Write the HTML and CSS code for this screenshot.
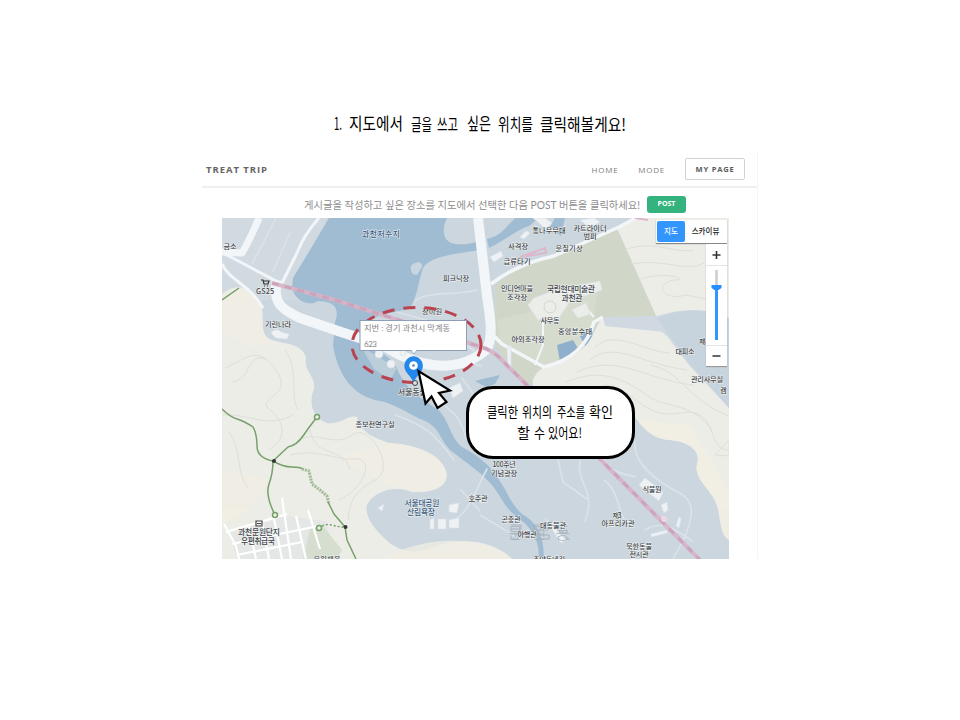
FILE: index.html
```html
<!DOCTYPE html>
<html lang="ko">
<head>
<meta charset="utf-8">
<title>Treat Trip</title>
<link rel="stylesheet" href="styles.css">
</head>
<body>
<main class="slide">
  <h1 class="caption"><svg class="hand" width="300" height="34" viewBox="330 107 300 34" font-size="17"><text x="334" y="130" textLength="8" lengthAdjust="spacingAndGlyphs">1.</text><text x="349" y="130" textLength="54" lengthAdjust="spacingAndGlyphs">지도에서</text><text x="411" y="131" textLength="21" lengthAdjust="spacingAndGlyphs">글을</text><text x="437" y="131" textLength="21" lengthAdjust="spacingAndGlyphs">쓰고</text><text x="467" y="130" textLength="24" lengthAdjust="spacingAndGlyphs">싶은</text><text x="498" y="131" textLength="35" lengthAdjust="spacingAndGlyphs">위치를</text><text x="540" y="131" textLength="86" lengthAdjust="spacingAndGlyphs">클릭해볼게요!</text></svg></h1>
  <section class="app">
    <header class="nav">
      <span class="brand">TREAT TRIP</span>
      <nav class="links"><span>HOME</span><span>MODE</span><span class="mypage">MY PAGE</span></nav>
    </header>
    <div class="prompt">
      <svg width="340" height="22" viewBox="302 195 340 22"><text class="prompt-text" x="304" y="209" font-size="10.5" textLength="336" lengthAdjust="spacingAndGlyphs">게시글을 작성하고 싶은 장소를 지도에서 선택한 다음 POST 버튼을 클릭하세요!</text></svg>
      <span class="post">POST</span>
    </div>
    <div class="map">
      <svg class="canvas" width="507" height="341" viewBox="222 218 507 341">
        <rect x="222" y="218" width="507" height="341" fill="#cbd6de"/>
        <path fill="#d2dae1" d="M222 218H328L310 250 293 278 300 300 222 300Z"/>
        <!-- water -->
        <g fill="#a0bcd3">
          <path d="M329 218H447C441 230 443 243 456 244C466 245 474 243 478 241L479 250C456 254 430 256 423 268C418 282 418 295 410 308C400 312 385 312 372 319L370 345C380 352 390 356 397 368C404 388 421 398 437 409C450 420 449 436 462 447C482 458 490 466 499 480C507 490 509 502 522 514C535 522 544 532 544 559H539C539 540 533 530 521 520C506 510 503 500 495 489C484 474 468 464 450 450C439 438 440 428 425 421C406 413 393 402 375 400C350 393 338 373 333 346L335 322C341 306 331 301 318 301C310 307 294 301 292 287L293 278 310 250Z"/>
          <path d="M487 239C503 236 507 224 516 218H539L529 226C516 230 506 240 489 248Z"/>
          <path d="M550 227 555 218H565L561 236Z"/>
          <path d="M475 381 487 378 500 375 495 384 486 387Z"/>
        </g>
        <path fill="#c8d6e0" d="M411 266C415 261 423 261 422 267L417 275C412 275 410 271 411 266Z"/>
        <path fill="#c9d5de" d="M356 338C361 340 366 346 370 352L397 368 390 380 374 369Z" opacity=".7"/>
        <!-- green park -->
        <path fill="#d0d7c8" d="M495 287C510 268 540 260 561 253L617 228 657 318 604 319C588 330 590 346 573 359L544 370C534 378 532 385 526 388L512 372 495 344Z"/>
        <path fill="#d6dccd" d="M497 320 530 312 555 286 597 282 598 290 590 338 574 354 545 365 500 340Z"/>
        <g fill="#8fb0cc"><path d="M557 345 573 340 579 350 567 362 560 362Z"/><path d="M580 336 592 328 593 340 585 346Z"/></g>
        <!-- hills -->
        <g fill="#ededE8">
          <path d="M617 228 635 218H729V318C715 311 690 307 657 318Z"/>
          <path d="M545 366C565 360 580 355 590 340L601 319 655 327 670 338 690 364 729 406V540C716 532 724 510 712 495C701 480 693 474 698 461C700 449 685 441 668 440C651 438 645 427 637 420L620 398 540 390C527 387 533 374 545 366Z"/>
          <path d="M222 294C240 280 253 290 260 302C266 317 259 330 268 338C280 345 302 341 306 358C303 371 316 376 314 389C308 403 313 418 327 423C341 425 348 414 357 417C361 432 371 437 390 443C414 444 445 455 447 475C446 490 428 493 412 492C395 485 374 491 367 505C364 518 378 533 391 544C410 556 421 551 440 545C465 537 496 542 512 559H222Z"/>
        </g>
        <g fill="#f1eee3" opacity=".75">
          <path d="M222 297C240 282 254 293 260 304 262 323 260 335 270 341L250 348 222 330Z"/>
          <path d="M390 444C420 444 445 457 446 474 445 489 427 492 415 491 390 488 361 475 340 455Z"/>
          <path d="M637 420C649 438 664 440 672 440 690 442 700 450 697 463 695 478 704 483 712 496 722 510 717 530 729 540V490L690 425Z"/>
          <path d="M401 550C442 535 485 538 512 559H385Z"/>
          <path d="M222 468 270 480 250 510 222 525Z"/>
        </g>
        <g fill="none" stroke="#dddfd8" stroke-width="1">
          <path d="M225 368C245 360 257 343 276 370S254 398 270 410 286 440 270 449M233 382C252 378 247 352 266 359M222 415C250 413 268 430 294 414M285 350C300 370 289 395 298 410M298 440C318 430 334 448 352 435S392 465 380 476 350 488 348 520M290 455C320 448 335 461 355 459S365 490 338 500M229 432C242 449 236 474 248 488M310 430C315 460 345 445 350 470"/>
          <path d="M627 249C654 240 675 254 693 250M631 264C664 258 686 273 704 263M641 279C668 270 690 281 674 280 654 283 662 302 686 295L706 299M665 232C680 240 690 230 729 241M595 347C615 329 640 350 669 353M590 360C614 340 641 364 687 370M577 372C618 353 642 379 693 385M566 382C595 370 618 374 645 394 665 410 690 400 712 430M603 385C635 386 640 420 680 413S705 450 729 450M650 365C680 370 690 402 729 416M715 455 729 440V456Z"/>
        </g>
        <!-- pale park paths -->
        <g fill="none" stroke="#dbe3e8" stroke-width="1.6" stroke-linecap="round">
          <path d="M415 301C428 290 457 296 477 290M397 312 440 324 474 351M405 352C425 390 456 353 481 366M430 386C443 414 457 404 466 438M452 521C470 513 477 487 487 469M480 515 520 539M580 460C576 485 597 490 585 521M558 459 563 482 587 499M635 441C632 466 662 484 681 494S690 530 673 559M604 459C612 475 626 473 635 477M604 480C618 490 618 510 625 521M645 530C661 520 674 528 692 541M395 415C425 425 436 435 454 460"/>
          <path d="M252 264 270 230 276 218M273 271 290 233M462 378 480 403M461 490 480 511"/>
        </g>
        <!-- roads -->
        <g fill="none" stroke="#f3f6f8" stroke-linejoin="round">
          <path stroke-width="7" d="M259 218C253 232 248 243 242 253L222 252"/>
          <path stroke-width="3" d="M223 253 278 282M319 218C302 237 300 247 295 257L280 287M222 264C230 281 249 284 263 308"/>
          <path stroke-width="10" d="M277 280C272 304 283 310 300 318L341 332 384 346C415 366 455 376 486 350C494 339 490 315 487 296L478 218"/>
          <path stroke-width="3.500" d="M491 284C512 268 535 260 554 256L619 227 636 218M489 331 502 344 544 367C569 361 587 348 594 322L603 317"/>
          <path stroke-width="2" d="M543 314V345L535 365M584 306 594 317"/>
        </g>
        <path fill="#d0d9e2" d="M603 317 657 316C685 307 710 308 729 319V408L688 364 664 332 605 326Z"/>
        <path fill="#c7d4de" d="M657 318C682 308 710 308 729 319V408L690 364 668 334Z"/>
        <!-- residential blocks -->
        <path fill="#e4e7e5" d="M229 533 286 516 326 521 333 559H237Z"/>
        <path fill="#d6decf" d="M310 529 323 526 342 550 337 559H303Z"/>
        <g fill="none" stroke="#fff" stroke-width="2.2">
          <path d="M226 532 287 514M232 544 318 526M237 555 302 542M224 524 236 546 239 559M282 498 291 559M296 516 306 559M308 510 320 549M249 527 256 559M262 523 269 559M274 519 282 559"/>
        </g>
        <!-- trails -->
        <g fill="none" stroke="#76a069" stroke-width="1.5" stroke-linejoin="round">
          <path d="M222 300 239 288M222 409Q230 417 237 419T253 427Q257 434 257 446T273 461Q273 473 269 484T275 515M317 417Q309 427 303 436T288 447L273 461Q283 467 292 467T302 469M328 502 334 514 345 527 347 540 356 559"/>
          <path stroke-dasharray="2 1" stroke-width="3" opacity=".65" d="M302 469 309 471 312 484 320 490 327 496 329 504"/>
          <path stroke-dasharray="2 2" d="M322 526C330 522 337 528 345 527"/>
          <g fill="#eef2e8"><circle cx="317" cy="417" r="2.5"/><circle cx="275" cy="515" r="2.5"/><circle cx="319" cy="528" r="2.5"/></g>
        </g>
        <g fill="#333"><circle cx="274" cy="461" r="2"/><circle cx="345.500" cy="527" r="2"/></g>
        <!-- buildings -->
        <g fill="#eef2f5" stroke="#dce3e9" stroke-width=".7">
          <path d="M490 257 501 251 503 256 494 262ZM520 237 526 231 530 233 524 239ZM533 218H545L552 223 546 229ZM580 220 594 218 600 222 590 228Z"/>
          <path fill="#ebede8" d="M528 305 534 298 550 292 600 281 602 290 570 301 557 321 545 317 538 320ZM572 310 586 303 590 314 578 318Z"/>
          <path d="M639 485 645 478 663 492 659 501ZM661 505 667 502 668 510 664 513ZM676 526 679 517 681 518 679 528ZM651 534 667 530 667 533 651 537Z"/>
          <path d="M430 520 434 518V529H430ZM438 519H446V529H438ZM449 520 459 518V528H449ZM449 505 459 503 457 513 449 512ZM545 518 566 540 561 543ZM473 499 481 497 482 503ZM378 508 384 504 382 511Z"/>
          <path d="M271 333C274 329 279 329 281 332L289 334 287 339 276 338Z"/><circle cx="379" cy="354" r="4"/><circle cx="391" cy="364" r="4"/><circle cx="403" cy="353" r="3"/><path d="M449 388 460 383 463 391 453 398ZM507 347 511 345 511 368 508 368Z"/>
        </g>
        <g fill="none" stroke="#d2d7d5"><circle cx="550" cy="307" r="6"/></g>
        <g fill="none" stroke="#a4b0ba" stroke-width=".9"><path d="M511 525H521V529H511M511 534H518V539H511M534 525H548V530H534ZM537 535H549V539H537M560 533H567V530H560ZM566 539H570"/></g>
        <!-- cable line -->
        <g fill="none">
          <path d="M272 283 335 300 411 324 478 346C498 351 503 363 516 374L598 457 702 562" stroke="#d8b3c6" stroke-width="4" opacity=".9"/>
          <path d="M272 283 335 300 411 324 478 346C498 351 503 363 516 374L598 457 702 562" stroke="#c8a0b8" stroke-width="3" stroke-dasharray="7 6" opacity=".8"/>
          <path d="M520 257 545 248 546 253 520 257M635 218 648 220" stroke="#deb6c9" stroke-width="2"/>
        </g>
        <circle cx="664" cy="519" r="3" fill="#f2d5e5"/>
        <text class="district" x="508" y="539" font-size="16" textLength="62">문 원 동</text>
        <!-- place names -->
        <g class="labels">
          <text class="water" x="381" y="236.500" textLength="38">과천저수지</text>
          <text x="230" y="249" textLength="13">금소</text>
          <text x="265" y="294" textLength="18" font-size="8">GS25</text>
          <text x="278" y="327" textLength="26">기린나라</text>
          <text x="456" y="281" textLength="26">피크닉장</text>
          <text x="432" y="314" textLength="20">장미원</text>
          <text x="518" y="249" textLength="20">사격장</text>
          <text x="517" y="264" textLength="27">급류타기</text>
          <text x="549" y="233" textLength="33">통나무무대</text>
          <text x="590" y="230.500" textLength="33">카트라이더</text><text x="590" y="239" textLength="13">범퍼</text>
          <text x="569" y="251" textLength="27">문칠기상</text>
          <text x="517" y="291" textLength="32">인디언마을</text><text x="517" y="300" textLength="20">조각장</text>
          <text class="big" x="571" y="292" textLength="48">국립현대미술관</text><text class="big" x="572" y="301" textLength="21">과천관</text>
          <text x="550" y="323" textLength="19">사무동</text>
          <text x="575" y="334" textLength="34">중앙분수대</text>
          <text x="528" y="342" textLength="33">야외조각장</text>
          <text x="685" y="354" textLength="19">대피소</text>
          <text x="711" y="344" textLength="24">제사계원</text>
          <text x="707" y="382" textLength="32">관리사무실</text>
          <text x="728" y="393" textLength="16">캠핑</text>
          <text x="375" y="427" textLength="39">종보전연구실</text>
          <text class="big" x="416" y="395" textLength="36">서울동물원</text>
          <text x="504" y="467" textLength="23">100주년</text><text x="504" y="475.500" textLength="26">기념광장</text>
          <text class="water" x="422" y="506" textLength="35">서울대공원</text><text class="water" x="421" y="515" textLength="28">산림욕장</text>
          <text x="478" y="501" textLength="19">호주관</text>
          <text x="511" y="522" textLength="19">곤충관</text>
          <text x="553" y="528" textLength="26">대동물관</text>
          <text x="527" y="537" textLength="19">야행관</text>
          <text x="549" y="562" textLength="32">조양동네길</text>
          <text x="617" y="517.500" textLength="9">제3</text><text x="618" y="526" textLength="33">아프리카관</text>
          <text x="652" y="492" textLength="19">식물원</text>
          <text x="639" y="549" textLength="26">북한동물</text><text x="639" y="557" textLength="19">전시관</text>
          <text class="big" x="259" y="535" textLength="42">과천문원단지</text><text class="big" x="258" y="544" textLength="34">우편취급국</text>
          <text x="327" y="562" textLength="27">문원체육</text>
        </g>
        <path d="M261 280H263L264 284H268L269 281H263M264 286H265M267 286H268" fill="none" stroke="#333" stroke-width="1.2"/>
        <path d="M256 521H262V526H256ZM257 523.500H261" fill="none" stroke="#444" stroke-width="1.2"/>
        <ellipse class="focus" cx="416.500" cy="345" rx="64.500" ry="37.500"/>
        <!-- address bubble -->
        <rect x="360" y="320.500" width="106.500" height="30" fill="#fff" stroke="#8d9eb6"/>
        <path d="M411 350 414 354 417 350" fill="#fff" stroke="#8d9eb6" stroke-width=".7"/>
        <text class="address" x="364" y="331" textLength="86" lengthAdjust="spacingAndGlyphs">지번 : 경기 과천시 막계동</text>
        <text class="address" x="364" y="347" textLength="13">623</text>
        <circle cx="415" cy="383" r="2.500" fill="#ddd" stroke="#444"/>
        <path fill="#2388ed" stroke="#1673d5" stroke-width=".6" d="M413.500 382C411 375 404.700 373 404.700 365.500A8.900 8.900 0 0 1 422.500 365.500C422.500 373 416 375 413.500 382Z"/>
        <circle cx="413.500" cy="365.500" r="4.300" fill="#fff"/><circle cx="413.500" cy="365.500" r="1.300" fill="#6286a4"/>
        <path fill="#fff" stroke="#000" stroke-width="2.200" stroke-linejoin="miter" d="M418.500 371 425.500 403.500 431.500 396.500 437.500 408 446.500 402 439 393 450 390.500Z"/>
      </svg>
      <div class="types"><b>지도</b><span>스카이뷰</span></div>
      <div class="zoom">
        <svg width="21" height="122" viewBox="0 0 21 122"><path d="M0 21.500H21M0 101.500H21" stroke="#e4e4e4"/><path d="M10.500 7V15M6.500 11H14.500M6.500 112H14.500" stroke="#333" stroke-width="1.600"/><path d="M10.500 26V44" stroke="#ccc" stroke-width="2.500"/><path d="M10.500 43V96" stroke="#3396ff" stroke-width="3"/><path d="M5.500 41H15.500V44L12.500 46H8.500L5.500 44Z" fill="#258fff"/></svg>
      </div>
      <div class="callout"><svg class="hand" width="136" height="48" viewBox="483 398 136 48" font-size="14"><text x="487" y="416.500" textLength="31" lengthAdjust="spacingAndGlyphs">클릭한</text><text x="522" y="416.500" textLength="30" lengthAdjust="spacingAndGlyphs">위치의</text><text x="557" y="416.500" textLength="28" lengthAdjust="spacingAndGlyphs">주소를</text><text x="589" y="416.500" textLength="24" lengthAdjust="spacingAndGlyphs">확인</text><text x="517" y="438" textLength="13" lengthAdjust="spacingAndGlyphs">할</text><text x="534" y="438" textLength="11" lengthAdjust="spacingAndGlyphs">수</text><text x="548" y="438" textLength="34" lengthAdjust="spacingAndGlyphs">있어요!</text></svg></div>
    </div>
  </section>
</main>
</body>
</html>
```

FILE: styles.css
```css
* { box-sizing: border-box; }
body { margin: 0; background: #fff; font-family: "Open Sans", "Noto Sans CJK KR", sans-serif; }
svg { display: block; }
.slide { width: 960px; height: 720px; padding-top: 107px; overflow: hidden; }
.caption { margin: 0 0 11px 330px; height: 34px; }
.hand text { font-family: "Noto Sans CJK KR", sans-serif; font-weight: 400; fill: #000; }
.app { width: 556px; margin-left: 202px; height: 407px; border-right: 1px solid #f5f5f5; }
.nav { height: 36px; display: flex; align-items: center; justify-content: space-between; padding: 0 12px 0 4px; border-bottom: 2px solid #f0f0f0; }
.brand { font: 700 9.5px "Open Sans", sans-serif; letter-spacing: .95px; color: #666; }
.links { display: flex; align-items: center; gap: 20px; font-size: 8px; letter-spacing: .75px; color: #808080; }
.mypage { width: 60px; height: 22px; border: 1px solid #d2d2d2; border-radius: 2px; display: flex; align-items: center; justify-content: center; font-weight: 700; font-size: 7.6px; color: #5c5c5c; white-space: nowrap; }
.prompt { height: 30px; padding: 7px 0 0 100px; display: flex; gap: 5px; }
.prompt-text { font-family: Lato, "Noto Sans CJK KR", sans-serif; font-weight: 400; fill: #8e8e8e; }
.post { width: 39px; height: 17px; margin-top: 1px; border-radius: 3px; background: #35b37e; color: #fff; font-size: 7px; line-height: 16px; font-weight: 700; text-align: center; }
.map { position: relative; width: 507px; height: 341px; margin-left: 20px; }
.canvas { overflow: hidden; }
.labels text { font-family: "Noto Sans CJK KR", sans-serif; font-size: 7.2px; font-weight: 500; fill: #414448; text-anchor: middle; paint-order: stroke; stroke: #f2f5f6; stroke-width: .9px; }
.labels .big { font-size: 7.8px; }
.labels .water { font-size: 7.8px; fill: #38587a; }
.district { font-family: "Noto Sans CJK KR", sans-serif; font-weight: 300; fill: #a9b4bd; }
.focus { fill: none; stroke: #bb4350; stroke-width: 3px; stroke-dasharray: 12 9; }
.address { font-family: Lato, "Noto Sans CJK KR", sans-serif; font-size: 8px; fill: #858585; }
.types { position: absolute; top: 2px; right: 2px; width: 71px; height: 23px; padding: 1px; display: flex; background: #fff; box-shadow: 0 1px 1px #888; font-size: 7.5px; line-height: 20px; }
.types b { width: 28px; border-radius: 2px; background: #3396ff; color: #fff; text-align: center; font-weight: 500; }
.types span { flex: 1; text-align: center; color: #222; font-weight: 500; }
.zoom { position: absolute; top: 26px; right: 2px; width: 21px; height: 122px; background: #fff; box-shadow: 0 1px 1px #999; }
.callout { position: absolute; left: 244px; top: 168px; width: 169px; height: 73px; border: 3px solid #000; border-radius: 27px; background: #fff; padding: 9px 0 0 14px; }
```
